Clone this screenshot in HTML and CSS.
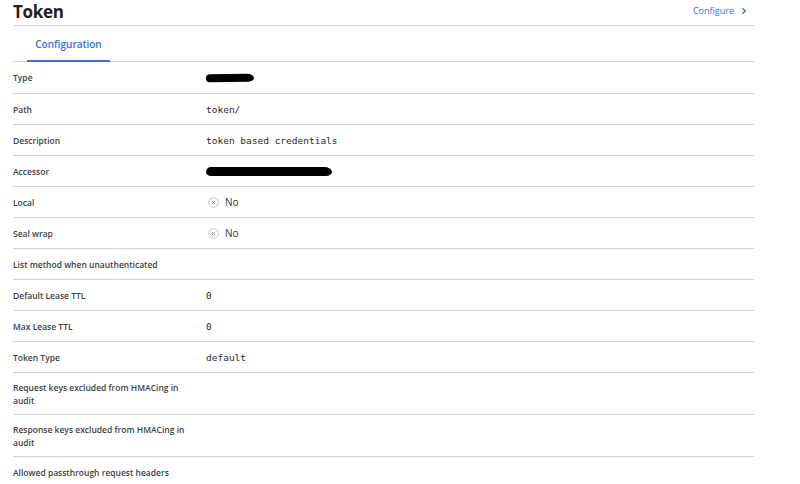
FILE: index.html
```html
<!DOCTYPE html>
<html>
<head>
<meta charset="utf-8">
<link rel="stylesheet" href="styles.css">
</head>
<body>
<div class="page">
  <header class="head">
    <h1 class="title">Token</h1>
    <a class="configure">Configure <svg class="chev" width="8" height="8" viewBox="0 0 8 8"><path d="M2.5 1.2 L5.3 4 L2.5 6.8" fill="none" stroke="#3b6de0" stroke-width="1.4"/></svg></a>
  </header>
  <nav class="tabs">
    <div class="tab">Configuration</div>
  </nav>
  <div class="rows">
    <div class="row first"><div class="label">Type</div><div class="value"><span class="redact r1"></span></div></div>
    <div class="row"><div class="label">Path</div><div class="value mono">token/</div></div>
    <div class="row"><div class="label">Description</div><div class="value mono">token based credentials</div></div>
    <div class="row"><div class="label">Accessor</div><div class="value"><span class="redact r2"></span></div></div>
    <div class="row"><div class="label">Local</div><div class="value bool"><svg class="xic" width="11" height="11" viewBox="0 0 11 11"><circle cx="5.5" cy="5.5" r="4.8" fill="none" stroke="#c4c7cc" stroke-width="1"/><path d="M3.8 3.8 L7.2 7.2 M7.2 3.8 L3.8 7.2" stroke="#8a8f98" stroke-width="0.9"/></svg><span>No</span></div></div>
    <div class="row"><div class="label">Seal wrap</div><div class="value bool"><svg class="xic" width="11" height="11" viewBox="0 0 11 11"><circle cx="5.5" cy="5.5" r="4.8" fill="none" stroke="#c4c7cc" stroke-width="1"/><path d="M3.8 3.8 L7.2 7.2 M7.2 3.8 L3.8 7.2" stroke="#8a8f98" stroke-width="0.9"/></svg><span>No</span></div></div>
    <div class="row"><div class="label">List method when unauthenticated</div><div class="value"></div></div>
    <div class="row"><div class="label">Default Lease TTL</div><div class="value mono">0</div></div>
    <div class="row"><div class="label">Max Lease TTL</div><div class="value mono">0</div></div>
    <div class="row"><div class="label">Token Type</div><div class="value mono">default</div></div>
    <div class="row tall"><div class="label">Request keys excluded from HMACing in audit</div><div class="value"></div></div>
    <div class="row tall"><div class="label">Response keys excluded from HMACing in audit</div><div class="value"></div></div>
    <div class="row"><div class="label">Allowed passthrough request headers</div><div class="value"></div></div>
  </div>
</div>
</body>
</html>
```
FILE: styles.css
```css
html, body {
  margin: 0;
  padding: 0;
  background: #fff;
}
body {
  font-family: "Open Sans", "Noto Sans", sans-serif;
  color: #333;
}
.page {
  margin-left: 13px;
  width: 741px;
}
.head {
  height: 25px;
  border-bottom: 1px solid #d2d4d8;
  display: flex;
  justify-content: space-between;
  align-items: flex-start;
}
.title {
  margin: 0;
  font-size: 17px;
  font-weight: 700;
  line-height: 24px;
  color: #1f2124;
  letter-spacing: -0.3px;
}
.configure {
  font-size: 9px;
  color: #3b6de0;
  line-height: 12px;
  margin-top: 5px;
  margin-right: 6px;
  display: flex;
  align-items: center;
  gap: 6px;
}
.tabs {
  height: 35px;
  border-bottom: 1px solid #d2d4d8;
  display: flex;
}
.tab {
  margin-left: 14px;
  width: 83px;
  box-sizing: border-box;
  border-bottom: 2px solid #3b6de0;
  margin-bottom: -1px;
  text-align: center;
  font-size: 10px;
  font-weight: 600;
  color: #3b6de0;
  padding-top: 11px;
  line-height: 14px;
}
.row {
  display: flex;
  align-items: center;
  height: 30px;
  border-bottom: 1px solid #d2d4d8;
}
.row.first {
  height: 31px;
}
.row.tall {
  height: 41px;
}
.label {
  width: 193px;
  font-size: 8.5px;
  font-weight: 600;
  line-height: 13px;
  color: #3c3f44;
  padding-right: 10px;
  box-sizing: border-box;
}
.value {
  font-size: 10px;
  color: #222;
}
.mono {
  font-family: "DejaVu Sans Mono", "Liberation Mono", monospace;
  font-size: 9.5px;
  color: #2a2a2a;
}
.bool {
  display: flex;
  align-items: center;
  gap: 6px;
  padding-left: 2px;
  font-size: 10px;
  color: #333;
}
.redact {
  display: block;
  background: #000;
}
.r1 {
  width: 48px;
  height: 8px;
  border-radius: 5px 8px 6px 4px / 4px 5px 4px 4px;
  transform: rotate(-1deg);
}
.r2 {
  width: 126px;
  height: 9px;
  border-radius: 5px 8px 6px 5px / 5px 5px 4px 4px;
}
```
